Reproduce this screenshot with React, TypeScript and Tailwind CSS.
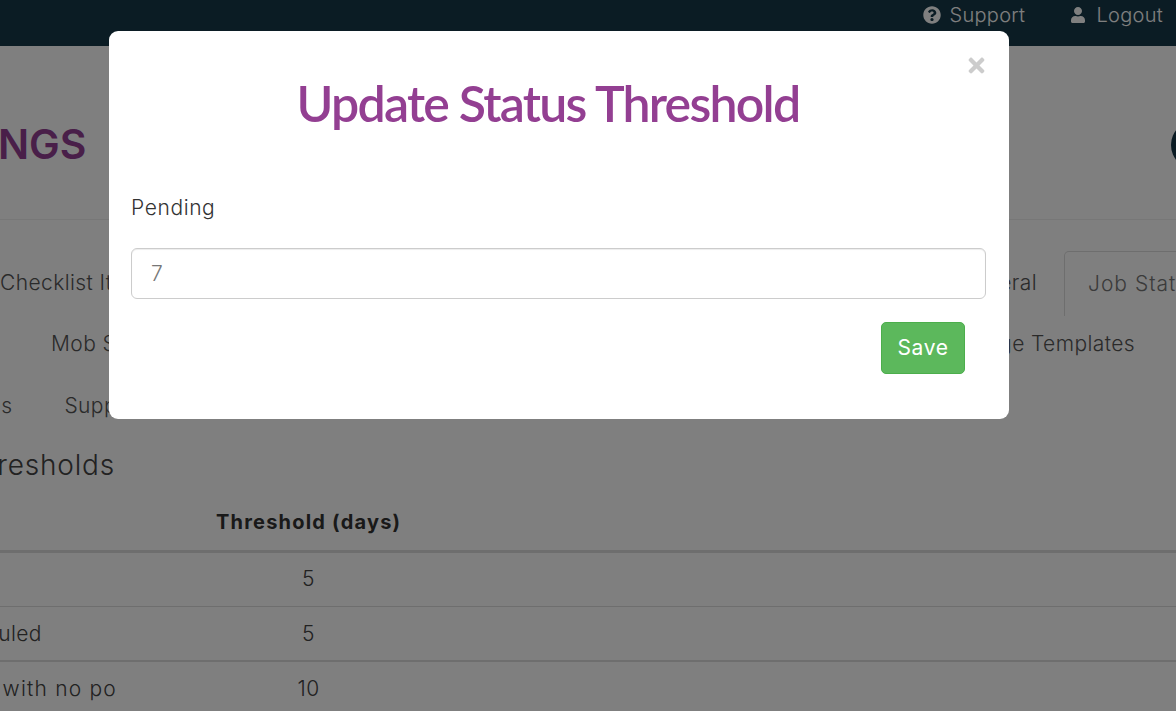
import React from "react";
import { FaQuestionCircle, FaTimes, FaUser } from "react-icons/fa";

const rows = [
  { name: "", days: "5", line: "border-b", spacing: "" },
  { name: "Scheduled", days: "5", line: "border-b-2", spacing: "" },
  { name: "Order with no po", days: "10", line: "border-b", spacing: "tracking-[1.2px]" },
];

function Page() {
  return (
    <div className="h-[711px] overflow-hidden bg-white text-[#555] text-[21px] font-light font-['Inter',sans-serif] tracking-[0.4px]">
      <header className="flex h-[46px] items-start justify-end gap-[45px] bg-[#163848] pr-[13px] pt-[1px] text-[20px] leading-[28px] text-white tracking-[0.3px]">
        <span className="flex items-center gap-[8px]">
          <FaQuestionCircle className="text-[18px]" /> Support
        </span>
        <span className="flex items-center gap-[10px]">
          <FaUser className="text-[16px]" /> Logout
        </span>
      </header>

      <div className="flex h-[174px] items-center justify-between border-b border-[#eee] pt-[25px]">
        <h1 className="ml-[-119px] text-[41px] font-semibold tracking-normal text-[#933f92]">SETTINGS</h1>
        <div className="mr-[-43px] h-[48px] w-[48px] rounded-full bg-[#163848]" />
      </div>

      <nav className="mt-[31px] flex h-[65px] items-start whitespace-nowrap">
        <span className="mt-[16px]">Checklist Items</span>
        <span className="ml-auto mt-[16px]">General</span>
        <span className="ml-[27px] mr-[-8px] h-[65px] w-[120px] shrink-0 rounded-t-[5px] border border-b-0 border-[#ddd] pl-[23px] pt-[16px] tracking-[1px] text-[#777]">
          Job Status
        </span>
      </nav>
      <nav className="flex h-[61px] items-center justify-between pb-[5px] pl-[51px] pr-[41px]">
        <span>Mob Settings</span>
        <span>Message Templates</span>
      </nav>
      <nav className="ml-[-43px] flex h-[61px] items-center gap-[52px] pb-[4px]">
        <span>Roles</span>
        <span>Support</span>
      </nav>

      <h2 className="ml-[-99px] mt-[9px] text-[28px] leading-[36px] tracking-[0.8px] text-[#444]">Job Thresholds</h2>

      <table className="ml-[-66px] mt-[15px] w-[1242px] table-fixed border-collapse">
        <thead>
          <tr className="h-[53px] border-b-[3px] border-[#ddd]">
            <th className="w-[282px]" />
            <th className="w-[185px] whitespace-nowrap pb-[3px] text-center text-[20px] font-bold tracking-[1.2px] text-[#333]">
              Threshold (days)
            </th>
            <th />
          </tr>
        </thead>
        <tbody>
          {rows.map((row) => (
            <tr key={row.days + row.name} className={`h-[55px] border-[#ddd] text-[#444] ${row.line}`}>
              <td className={`whitespace-nowrap ${row.spacing}`}>{row.name}</td>
              <td className="text-center">{row.days}</td>
              <td />
            </tr>
          ))}
        </tbody>
      </table>
    </div>
  );
}

export default function App() {
  return (
    <div className="relative h-[711px] overflow-hidden">
      <Page />
      <div className="absolute inset-0 bg-black/50" />
      <div className="absolute left-[109px] top-[31px] h-[388px] w-[900px] rounded-[9px] bg-white font-['Inter',sans-serif] font-light tracking-[0.6px]">
        <div className="flex items-start pl-[22px] pr-[21px] pt-[27px]">
          <h3 className="flex-1 pt-[15px] text-center font-['Lato',sans-serif] text-[50px] font-semibold leading-[60px] tracking-[-1.75px] text-[#933f92]">
            Update Status Threshold
          </h3>
          <button className="mt-[-4px] text-[23px] text-[#ccc]">
            <FaTimes />
          </button>
        </div>
        <div className="pl-[22px] pr-[23px]">
          <label className="mt-[60px] block text-[21px] leading-[30px] text-[#333]">Pending</label>
          <div className="mt-[25px] flex h-[51px] items-center rounded-[6px] border border-[#ccc] pl-[19px] text-[21px] text-[#777] shadow-[inset_0_1px_1px_rgba(0,0,0,0.075)]">
            7
          </div>
          <div className="mt-[23px] flex justify-end pr-[21px]">
            <button className="h-[52px] w-[84px] rounded-[5px] border border-[#4cae4c] bg-[#5cb85c] text-[21px] font-normal text-white">
              Save
            </button>
          </div>
        </div>
      </div>
    </div>
  );
}
